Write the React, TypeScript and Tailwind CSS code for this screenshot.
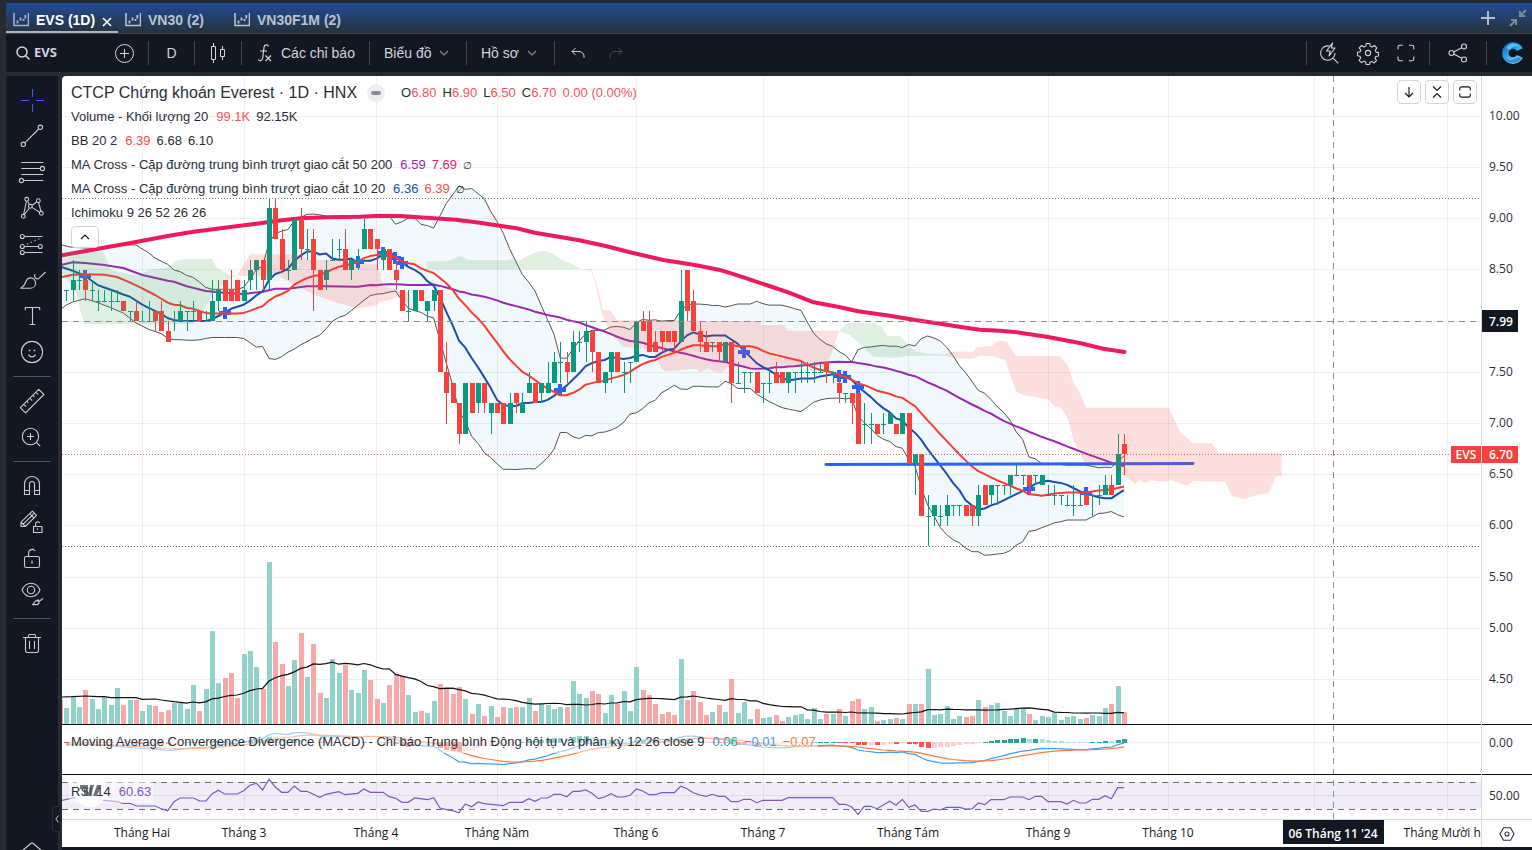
import React from 'react';

type Pt = [number, number];
type Segment = { at: Pt; pts: number[] };

const BAR = 19 / 3;
const X = (i: number) => 4.3 + i * BAR;
const Y = (price: number) => 40.3 + (10 - price) * 102.4;

// open, high, low, close in tenths, two digits each
const CANDLES = `
83838283 83868284 84858384 84858283 83848283 82838182 82838282 82838182 82838282 82828181
81818081 81828080 80818080 80828080 81817980 81827979 79807878 80817980 80828081 81817981
81828081 81818080 80818080 80848082 82848183 84848282 83858282 84848282 82848283 84868385
85868386 86868384 84928391 91928888 88898585 85868485 85908590 90918687 87898687 88898185
85858383 84868385 86888686 87888687 87898585 85868486 86878586 87908789 89898787 88888587
86878587 87878585 85868384 83838181 81838081 81838183 83838282 81828082 82838183 83837575
75787073 74747272 72726869 69746974 74747171 72747174 74747172 71726972 72727171 72727070
70737072 73737172 71737172 73757374 74747272 73747274 73767374 74777476 76787476 76777475
75797578 78797778 78807679 79797577 77777474 74757375 75777477 77777575 75767375 76767476
76807680 80817979 80817777 78797777 79797778 79797878 79797778 78857882 85858081 82837979
79807778 78797777 78787778 78787677 76787678 78787274 74767474 75757375 75757475 75757373
74747274 74757374 75767474 75757474 74757375 75757375 75767475 75767475 75767475 75767575
76767475 75757475 74757273 73737273 73737072 73736868 70726870 70716870 70706969 70716970
70717071 70706969 69716971 71716666 66676367 67676161 61635861 61626062 61626061 61636062
62626162 62626162 62626161 62626061 61646063 64646262 63646264 64646264 64646364 64656365
65666565 65656465 65656364 65656465 64656465 63646363 63646263 63636263 62636262 62646162
62636262 63636262 63636163 63646263 63656364 64656363 64696467 68696567`
  .trim()
  .split(/\s+/)
  .map((s) => [0, 2, 4, 6].map((k) => Number(s.slice(k, k + 2)) / 10));

// bar heights in thirds of a pixel
const VOLUME = [
  48, 84, 51, 102, 75, 45, 81, 57, 108, 57, 72, 72, 39, 57, 54, 36, 42, 63, 63, 45,
  117, 39, 105, 279, 123, 138, 153, 78, 210, 219, 171, 105, 486, 246, 180, 114, 192, 273, 141, 240,
  93, 78, 195, 153, 177, 102, 93, 162, 132, 75, 63, 117, 151, 144, 87, 36, 39, 33, 69, 120,
  111, 90, 111, 75, 30, 60, 24, 54, 21, 51, 48, 51, 51, 78, 39, 60, 57, 45, 51, 51,
  129, 90, 78, 99, 90, 33, 87, 60, 99, 39, 171, 102, 87, 60, 30, 36, 27, 195, 72, 99,
  66, 27, 36, 57, 36, 135, 33, 66, 15, 45, 18, 21, 27, 9, 21, 27, 30, 15, 48, 15,
  30, 30, 45, 24, 69, 75, 45, 51, 9, 12, 15, 18, 15, 60, 60, 60, 165, 27, 30, 54,
  15, 24, 21, 24, 72, 51, 57, 63, 39, 24, 45, 48, 30, 12, 24, 21, 33, 12, 21, 24,
  15, 18, 27, 24, 48, 60, 114, 36,
];

const closes = CANDLES.map((c) => c[3]);

function sma(data: number[], n: number): (number | null)[] {
  return data.map((_, i) =>
    i < n - 1 ? null : data.slice(i - n + 1, i + 1).reduce((a, b) => a + b, 0) / n,
  );
}

function deviation(data: number[], n: number): number[] {
  const mean = sma(data, n);
  return data.map((_, i) => {
    const m = mean[i];
    if (m === null) return 0;
    return Math.sqrt(data.slice(i - n + 1, i + 1).reduce((a, b) => a + (b - m) ** 2, 0) / n);
  });
}

function ema(data: number[], n: number, seed: number): number[] {
  let e = seed;
  return data.map((v) => (e += (v - e) * (2 / (n + 1))));
}

function trace(...segments: Segment[]): Pt[] {
  const out: Pt[] = [];
  segments.forEach(({ at, pts }) => {
    for (let k = 0; k < pts.length; k += 2) out.push([at[0] + pts[k] / 3, at[1] + pts[k + 1] / 3]);
  });
  return out;
}

function plot(values: (number | null)[], scale: (v: number) => number): Pt[] {
  const out: Pt[] = [];
  values.forEach((v, i) => v !== null && out.push([X(i), scale(v)]));
  return out;
}

const join = (pts: Pt[]) => pts.map(([x, y]) => `${x.toFixed(1)},${y.toFixed(1)}`).join(' ');

const A: Pt = [-2, 0];
const B: Pt = [318, 0];
const C: Pt = [638, 184];
const D: Pt = [918, 224];
const V: Pt = [-2, 474];
const W: Pt = [378, 474];
const Z: Pt = [778, 564];

const mid20 = sma(closes, 20);
const dev20 = deviation(closes, 20);

const ma10 = [
  ...trace({ at: A, pts: [6, 574, 38, 584, 76, 600, 114, 628, 152, 641, 171, 648] }),
  ...plot(sma(closes, 10), Y),
];
const ma20 = [
  ...trace({ at: A, pts: [6, 603, 38, 596, 76, 595, 133, 596, 171, 603, 209, 619, 247, 637, 285, 657, 323, 680, 342, 686, 361, 688] }),
  ...plot(mid20, Y),
];
const ma50 = [
  ...trace({ at: A, pts: [6, 566, 38, 559, 76, 561, 133, 567, 190, 576, 247, 597, 323, 614, 342, 617, 380, 631, 437, 645, 494, 650, 551, 654, 608, 647, 646, 638, 684, 638, 741, 631, 798, 631, 893, 632, 931, 627] }),
  ...plot(sma(closes, 50), Y),
];
const ma200 = trace(
  { at: A, pts: [6, 538, 115, 518, 228, 498, 323, 480, 400, 467, 494, 455, 589, 443, 665, 433, 722, 427, 800, 424, 900, 422] },
  { at: B, pts: [0, 419, 60, 420, 150, 426, 228, 431, 300, 440, 358, 449, 410, 457, 464, 470, 541, 483, 598, 493, 680, 511, 750, 529, 850, 552, 940, 566] },
  { at: C, pts: [0, 18, 56, 29, 94, 40, 151, 59, 208, 78, 265, 97, 341, 127, 417, 141, 474, 154, 569, 167, 645, 180, 702, 188, 797, 203] },
  { at: D, pts: [0, 89, 60, 92, 110, 97, 204, 111, 299, 129, 370, 146, 433, 156] },
);
const upper = [
  ...trace({ at: A, pts: [6, 507, 30, 513, 76, 516, 114, 515, 152, 508, 190, 506, 228, 507, 247, 519, 266, 530, 285, 546, 304, 556, 323, 565, 342, 582, 361, 587] }),
  ...plot(mid20.map((m, i) => (m === null ? null : m + 2 * dev20[i])), Y),
];
const lower = [
  ...trace({ at: A, pts: [6, 697, 19, 687, 38, 678, 76, 668, 114, 680, 152, 695, 190, 711, 228, 741, 266, 760, 304, 773, 325, 788, 342, 791, 361, 791] }),
  ...plot(mid20.map((m, i) => (m === null ? null : m - 2 * dev20[i])), Y),
];

const greenClouds = [
  trace({ at: A, pts: [6, 545, 35, 528, 130, 528, 152, 582, 235, 600, 265, 582, 320, 575, 345, 555, 375, 549, 455, 549, 470, 575, 510, 598, 530, 598, 490, 625, 460, 655, 437, 690, 400, 745, 75, 745, 60, 700, 50, 650, 6, 590] }),
  trace({ at: B, pts: [140, 556, 205, 556, 230, 544, 245, 541, 265, 553, 380, 553, 395, 549, 415, 556, 440, 541, 465, 530, 490, 524, 520, 533, 545, 551, 600, 575, 600, 580, 140, 580] }),
  trace({ at: C, pts: [417, 212, 440, 192, 460, 188, 525, 190, 545, 200, 562, 228, 600, 228, 625, 256, 650, 275, 690, 281, 735, 283, 735, 287, 620, 287, 600, 292, 570, 293, 520, 290, 490, 262, 450, 225] }),
];
const pinkClouds = [
  trace(
    { at: A, pts: [530, 600, 570, 535, 725, 535, 740, 551, 855, 551, 870, 561, 950, 565, 965, 600] },
    { at: B, pts: [0, 600, 10, 630, 58, 645, 90, 650, 90, 690, 60, 660, 30, 672, 0, 677] },
    { at: A, pts: [950, 688, 895, 697, 830, 680, 760, 655, 700, 625, 640, 590, 620, 600] },
  ),
  trace(
    { at: B, pts: [600, 578, 635, 580, 655, 640, 668, 703, 690, 703, 712, 733, 882, 733] },
    { at: C, pts: [0, 183, 180, 183, 185, 196, 255, 196, 262, 212, 417, 212, 395, 280, 375, 320, 85, 320, 65, 338, 45, 335, 25, 325, 0, 338] },
    { at: B, pts: [950, 878, 860, 886, 845, 880, 820, 820, 770, 816, 730, 812, 690, 770, 665, 710, 650, 640, 635, 585] },
  ),
  trace(
    { at: C, pts: [735, 280, 760, 275, 820, 275, 830, 262, 870, 260] },
    { at: D, pts: [0, 139, 35, 138, 48, 126, 60, 122, 80, 125, 108, 168, 240, 169, 265, 200, 280, 245, 300, 280, 318, 323, 566, 323, 600, 395, 640, 430, 695, 430, 718, 460, 905, 460, 905, 527, 888, 530, 865, 580, 840, 583, 790, 597, 755, 588, 735, 545, 640, 543, 620, 557, 575, 541, 550, 545, 510, 541, 495, 548, 480, 541, 465, 551, 430, 525, 400, 494, 315, 490, 300, 460, 280, 420, 265, 360, 245, 325, 225, 320, 205, 298, 130, 285, 108, 275, 75, 180, 35, 168, 0, 167] },
    { at: C, pts: [830, 292, 815, 296, 765, 294, 735, 287] },
  ),
];

const volumeAverage = [
  ...trace({ at: V, pts: [6, 441, 38, 440, 76, 438, 114, 440, 133, 440, 152, 443, 228, 443, 247, 448, 285, 447, 304, 450, 342, 455, 361, 457] }),
  ...plot(sma(VOLUME, 20), (v) => 648 - v / 3),
];

const ZERO = 666.3;
const fast = ema(closes, 12, 8.38);
const slow = ema(closes, 26, 8.42);
const macd = fast.map((f, i) => f - slow[i]);
const signal = ema(macd, 9, -0.02);
const macdY = (v: number) => ZERO - v * 62;

const rsi = trace(
  { at: V, pts: [6, 751, 45, 742, 140, 752, 171, 755, 190, 760, 209, 760, 230, 768, 285, 768, 304, 776, 323, 782, 342, 755, 361, 744, 400, 744, 419, 753, 438, 753, 457, 731, 475, 721, 494, 732, 532, 732, 551, 722, 570, 706, 589, 700, 608, 720, 627, 688, 646, 711, 665, 727, 684, 727, 703, 708, 722, 724, 741, 724, 779, 742, 798, 733, 836, 725, 855, 734, 893, 730, 912, 717, 931, 727, 969, 727, 988, 740, 1007, 745, 1026, 757, 1045, 757, 1064, 744, 1102, 749, 1121, 743] },
  { at: W, pts: [0, 774, 19, 779, 38, 782, 57, 788, 76, 762, 95, 770, 114, 756, 133, 761, 190, 767, 209, 757, 247, 757, 266, 746, 285, 754, 304, 744, 323, 744, 342, 733, 361, 733, 380, 740, 399, 724, 418, 724, 437, 720, 456, 730, 475, 746, 494, 741, 513, 731, 532, 741, 551, 741, 570, 736, 589, 717, 608, 723, 627, 734, 646, 734, 665, 728, 703, 728, 722, 709, 741, 716, 760, 728, 779, 735, 798, 739, 817, 733, 836, 739, 855, 739, 874, 755, 893, 755, 912, 748, 931, 748, 950, 758, 969, 751, 1026, 751, 1045, 743, 1178, 743] },
  { at: Z, pts: [-3, 493, 16, 493, 35, 501, 54, 523, 73, 499, 92, 499, 111, 506, 149, 484, 168, 496, 187, 478, 206, 502, 225, 495, 244, 514, 263, 514, 282, 507, 301, 510, 320, 502, 358, 502, 377, 507, 396, 507, 415, 489, 434, 494, 453, 479, 491, 479, 510, 471, 548, 471, 567, 479, 586, 469, 605, 469, 624, 485, 662, 485, 681, 492, 700, 481, 719, 489, 738, 489, 757, 478, 776, 478, 795, 467, 814, 476, 833, 443, 852, 443] },
);

const CROSSES: Pt[] = [
  [23, 199], [163, 236], [296, 185], [321, 176], [327, 178], [333, 181], [340, 186], [498, 313],
  [682, 275], [777, 299], [783, 300], [796, 310], [967, 412], [1024, 416],
];

const MONTHS: [number, string][] = [
  [80, 'Tháng Hai'], [182, 'Tháng 3'], [314, 'Tháng 4'], [435, 'Tháng Năm'], [574, 'Tháng 6'],
  [701, 'Tháng 7'], [846, 'Tháng Tám'], [986, 'Tháng 9'], [1106, 'Tháng 10'], [1252, ''], [1385, 'Tháng Mười hai'],
];
const PRICES = [10, 9.5, 9, 8.5, 8, 7.5, 7, 6.5, 6, 5.5, 5, 4.5];

function Chart() {
  return (
    <svg className="block h-full w-full" role="img" aria-label="EVS 1D">
      <rect y="706" width="100%" height="27" fill="#f0ecf8" />
      <g stroke="#2a2e39" strokeOpacity="0.08" shapeRendering="crispEdges">
        {PRICES.map((p) => (
          <line key={p} x1="0" x2="100%" y1={Math.floor(Y(p)) + 0.5} y2={Math.floor(Y(p)) + 0.5} />
        ))}
        <line x1="0" x2="100%" y1="666.5" y2="666.5" />
        <line x1="0" x2="100%" y1="719.5" y2="719.5" />
        {MONTHS.map(([x]) => (
          <line key={x} x1={x + 0.5} x2={x + 0.5} y1="0" y2="742" />
        ))}
      </g>

      <g shapeRendering="crispEdges">
        <rect x="0" y="624" width="1" height="24" fill="#f7a8a7" />
        {VOLUME.map((v, i) => (
          <rect
            key={i}
            x={Math.round(X(i)) - 2}
            y={Math.round(648 - v / 3)}
            width="5"
            height={Math.round(v / 3)}
            fill={CANDLES[i][3] < CANDLES[i][0] ? '#f7a8a7' : '#92d2cc'}
          />
        ))}
      </g>
      <polyline points={join(volumeAverage)} fill="none" stroke="#111" strokeWidth="1.2" />

      <polygon points={join([...upper, ...[...lower].reverse()])} fill="#2299dd" fillOpacity="0.06" />

      <g fill="none" strokeLinejoin="round">
        <polyline points={join(upper)} stroke="#555" strokeWidth="1" />
        <polyline points={join(lower)} stroke="#555" strokeWidth="1" />
        <polyline points={join(ma200)} stroke="#ef1a5c" strokeWidth="4" strokeLinecap="round" />
        <polyline points={join(ma50)} stroke="#9c27b0" strokeWidth="2" />
        <polyline points={join(ma10)} stroke="#1b4fa8" strokeWidth="2" />
      </g>
      <g fill="#2962ff" shapeRendering="crispEdges">
        {CROSSES.map(([x, y]) => (
          <path key={x} d={`M${x - 2} ${y - 5}h4v4h4v4h-4v4h-4v-4h-4v-4h4z`} />
        ))}
      </g>
      <polyline points={join(ma20)} fill="none" stroke="#fb3b33" strokeWidth="2" strokeLinejoin="round" />
      <line x1="764" y1="388.5" x2="1131" y2="387.5" stroke="#2962ff" strokeWidth="3" strokeLinecap="round" />

      <g shapeRendering="crispEdges">
        {CANDLES.map(([o, h, l, c], i) => {
          const x = Math.round(X(i));
          const fill = c < o ? '#f7413d' : '#089981';
          const top = Math.round(Y(Math.max(o, c)));
          const bottom = Math.round(Y(Math.min(o, c)));
          return (
            <g key={i} fill={fill}>
              <rect x={x} y={Math.round(Y(h))} width="1" height={Math.max(1, Math.round(Y(l)) - Math.round(Y(h)))} />
              <rect x={x - 2} y={top} width="5" height={Math.max(1, bottom - top)} />
            </g>
          );
        })}
      </g>

      {greenClouds.map((c, i) => (
        <polygon key={i} points={join(c)} fill="#43a047" fillOpacity="0.17" />
      ))}
      {pinkClouds.map((c, i) => (
        <polygon key={i} points={join(c)} fill="#f44336" fillOpacity="0.17" />
      ))}

      <g shapeRendering="crispEdges">
        <line x1="0" x2="100%" y1="122.5" y2="122.5" stroke="#777" strokeDasharray="1 2" />
        <line x1="0" x2="100%" y1="470.5" y2="470.5" stroke="#777" strokeDasharray="1 2" />
        <line x1="0" x2="100%" y1="378.5" y2="378.5" stroke="#f7525f" strokeDasharray="1 2" />

        {macd.map((m, i) => {
          const h = m - signal[i];
          const prev = i ? macd[i - 1] - signal[i - 1] : h;
          const size = Math.max(1, Math.round(Math.abs(h) * 62));
          const fill = h >= 0 ? (h >= prev ? '#26a69a' : '#b2dfdb') : h <= prev ? '#ff5252' : '#ffcdd2';
          return <rect key={i} x={Math.round(X(i)) - 2} y={h >= 0 ? 667 - size : 666} width="5" height={size} fill={fill} />;
        })}
      </g>
      <polyline points={join(plot(macd, macdY))} fill="none" stroke="#3da0ee" strokeWidth="1.2" />
      <polyline points={join(plot(signal, macdY))} fill="none" stroke="#ff7a3d" strokeWidth="1.2" />

      <polyline points={join(rsi)} fill="none" stroke="#7e57c2" strokeWidth="1.2" />
      <g stroke="#6b6e78" shapeRendering="crispEdges">
        <line x1="0" x2="100%" y1="706.5" y2="706.5" strokeDasharray="6 5" />
        <line x1="0" x2="100%" y1="733.5" y2="733.5" strokeDasharray="6 5" />
        <line x1="0" x2="100%" y1="245.5" y2="245.5" stroke="#8a8d96" strokeDasharray="6 5" />
        <line x1="1271.5" x2="1271.5" y1="0" y2="743" stroke="#8a8d96" strokeDasharray="6 5" />
      </g>
      <g stroke="#111" shapeRendering="crispEdges">
        <line x1="0" x2="100%" y1="648.5" y2="648.5" />
        <line x1="0" x2="100%" y1="698.5" y2="698.5" />
      </g>
    </svg>
  );
}

function PriceAxis() {
  const label = 'text-[12px]';
  return (
    <svg className="block h-full w-full" fill="#2a2e39" fontFamily="'Open Sans', 'Noto Sans', sans-serif">
      {PRICES.filter((p) => p !== 8).map((p) => (
        <text key={p} x="7" y={Math.floor(Y(p)) + 4} className={label}>
          {p.toFixed(2)}
        </text>
      ))}
      <text x="7" y="671" className={label}>0.00</text>
      <text x="7" y="724" className={label}>50.00</text>
      <rect x="0" y="234" width="36" height="22" fill="#131722" />
      <text x="7" y="250" className={label} fill="#fff" fontWeight="600">7.99</text>
      <rect x="0" y="370" width="36" height="17" fill="#f7413d" />
      <text x="7" y="383" className={label} fill="#fff" fontWeight="600">6.70</text>
      <path d="M0 648.5H60M0 698.5H60" stroke="#111" />
    </svg>
  );
}

type IconProps = { children: React.ReactNode; className?: string; size?: number };

function Icon({ children, className = 'size-7', size = 28 }: IconProps) {
  return (
    <svg viewBox={`0 0 ${size} ${size}`} className={className} fill="none" stroke="currentColor" strokeWidth="1.1" strokeLinejoin="round" aria-hidden="true">
      {children}
    </svg>
  );
}

const TOOLS: ({ name: string; active?: boolean; icon: React.ReactNode } | null)[] = [
  { name: 'Con trỏ', active: true, icon: <path d="M14.5 3v8M14.5 18v8M3 14.5h8M18 14.5h8" /> },
  {
    name: 'Đường xu hướng',
    icon: (
      <>
        <circle cx="5.3" cy="22.3" r="2.2" />
        <circle cx="22.3" cy="5.3" r="2.2" />
        <path d="M7 20.7L20.7 7" />
      </>
    ),
  },
  {
    name: 'Fibonacci',
    icon: (
      <>
        <path d="M3.3 4.5h22M3.3 10.5h19M3.3 16.5h22M5.6 22.5h19.7" />
        <circle cx="24.4" cy="10.5" r="2.1" />
        <circle cx="3.4" cy="22.5" r="2.1" />
      </>
    ),
  },
  {
    name: 'Mẫu hình',
    icon: (
      <>
        <path d="M8.4 7.3L5.7 20.2M9.6 7.2l1.9 3.4M14.1 11.2l4.5-3.2M20.7 8.8l2.2 8.4M14 13.4l7.6 4.8M11.3 14.1l-4.9 6.4" />
        <circle cx="8.7" cy="5.3" r="1.9" />
        <circle cx="20.3" cy="6.7" r="1.9" />
        <circle cx="12.3" cy="12.3" r="1.9" />
        <circle cx="23.3" cy="19.3" r="1.9" />
        <circle cx="5.3" cy="22.3" r="1.9" />
      </>
    ),
  },
  {
    name: 'Dự báo',
    icon: (
      <>
        <path d="M6.5 6.5h18M6.5 16.5h13.6M6.5 22.5h18" />
        <path d="M9 14.2l13-5.8" strokeDasharray="1.3 2.8" />
        <circle cx="4.3" cy="6.5" r="2" />
        <circle cx="4.3" cy="16.5" r="2" />
        <circle cx="4.3" cy="22.5" r="2" />
        <circle cx="22.3" cy="16.5" r="2" />
      </>
    ),
  },
  {
    name: 'Cọ vẽ',
    icon: (
      <>
        <path d="M2.7 22.3H12c3.4 0 5.6-2.4 5.6-5.4 0-2.9-2.1-5-4.9-5-2.4 0-3.9 1.4-4.8 3.8-1 2.8-2.6 5-5.2 6.6z" />
        <path d="M17.2 8.2c-1 .9-.8 2.4.3 3.6 1.1 1.2 2.6 1.3 3.6.4L27.6 6" />
      </>
    ),
  },
  { name: 'Văn bản', icon: <path d="M7.3 8.3V5.5h14.4v2.8M14.5 5.5v17M11.7 22.5h5.6" /> },
  {
    name: 'Biểu tượng',
    icon: (
      <>
        <circle cx="14" cy="14" r="10.6" />
        <path d="M10.5 16.5c.5 1.6 1.9 2.4 3.5 2.4s3-.8 3.5-2.4" />
        <path d="M10.8 12.5h1.6M15.6 12.5h1.6" strokeWidth="1.7" />
      </>
    ),
  },
  null,
  {
    name: 'Thước đo',
    icon: (
      <path d="M2.3 20.7L20.7 2.3l5.2 5.2L7.5 25.9zM5.8 17.2l2.4 2.4M8.8 14.2l1.6 1.6M11.8 11.2l2.4 2.4M14.8 8.2l1.6 1.6M17.8 5.2l2.4 2.4" />
    ),
  },
  {
    name: 'Phóng to',
    icon: (
      <>
        <circle cx="12.5" cy="13.5" r="8.2" />
        <path d="M18.4 19.3l3.8 3.8M12.5 10v7M9 13.5h7" />
      </>
    ),
  },
  null,
  {
    name: 'Nam châm',
    icon: <path d="M6.5 22.5V12a7.5 7.5 0 0 1 15 0v10.5h-5V12a2.5 2.5 0 0 0-5 0v10.5zM6.5 18.5h5M16.5 18.5h5" />,
  },
  {
    name: 'Khóa vẽ',
    icon: (
      <>
        <path d="M3 18.5v-4.3L14.3 3.1l4.2 4.2L7.3 18.5zM3 14.2l4.3 4.3M5 16.3L16.4 5.2M11.8 5.6l4.2 4.2" />
        <path d="M15.5 18.5h8.5v6h-8.5zM17.5 18.5V16a2.2 2.2 0 0 1 4.2-.9M19.5 20.5v1.5" />
      </>
    ),
  },
  {
    name: 'Khóa',
    icon: (
      <>
        <rect x="6.5" y="12.5" width="15" height="11" rx="1.8" />
        <path d="M10.6 12.5V9a3.5 3.5 0 0 1 6.4-2M14 16.5v3.2" />
      </>
    ),
  },
  {
    name: 'Ẩn hiện',
    icon: (
      <>
        <path d="M4 10c2-4.3 5.4-6.7 9-6.7S20 5.7 22 10c-2 4.3-5.4 6.7-9 6.7S6 14.3 4 10z" />
        <circle cx="13" cy="10" r="3.7" />
        <path d="M14.5 24.6c1.6-.3 1.5-4 4.2-4 1.5 0 2.3 1 2.3 2 0 1.3-1 2-2.5 2zM20 19c-.3 1.8 1.2 2.5 2.5 1.5l2.5-2.2" />
      </>
    ),
  },
  null,
  {
    name: 'Xóa',
    icon: (
      <path d="M5 8.5h18M10.5 8.5V6.5c0-.6.4-1 1-1h5c.6 0 1 .4 1 1v2M7.5 8.5v13c0 1.1.7 2 1.8 2h9.4c1.1 0 1.8-.9 1.8-2v-13M11.5 12v8M16.5 12v8" />
    ),
  },
];

function TabIcon() {
  return (
    <svg viewBox="0 0 16 14" className="h-3.5 w-4" fill="none" stroke="currentColor" strokeWidth="1.6" aria-hidden="true">
      <path d="M1 0v12.5h14.5V0" />
      <path d="M4.5 7.5v3M7.5 4.500v3M10.5 6v2M12.3 2v3.5" strokeWidth="1.8" />
    </svg>
  );
}

function Divider() {
  return <span className="h-6 w-px shrink-0 bg-[#434651]" />;
}

function Chevron() {
  return (
    <svg viewBox="0 0 10 6" className="h-1.5 w-2.5 text-[#868993]" fill="none" stroke="currentColor" strokeWidth="1.2" aria-hidden="true">
      <path d="M1 1l4 4 4-4" />
    </svg>
  );
}

function TopBar() {
  return (
    <header className="mt-[3px] ml-1.5 flex h-[31px] items-stretch border-b border-[#3a3f4b] bg-gradient-to-b from-[#1f4b96] to-[#27313d] text-[14px] font-bold text-[#b9c3d2]">
      <nav className="flex">
        <button className="flex w-28 items-center gap-[7px] border-b-2 border-[#aeb5bf] pt-1.5 pl-[7px] text-white">
          <span className="text-[#9fb2cc]"><TabIcon /></span>
          EVS (1D)
          <svg viewBox="0 0 10 10" className="mt-1 size-2.5 shrink-0" stroke="currentColor" strokeWidth="1.6" aria-hidden="true">
            <path d="M1 1l8 8M9 1L1 9" />
          </svg>
        </button>
        <button className="flex w-[109px] items-center gap-[7px] pt-1 pl-[7px]">
          <TabIcon />
          VN30 (2)
        </button>
        <button className="flex items-center gap-[7px] pt-1 pl-[7px]">
          <TabIcon />
          VN30F1M (2)
        </button>
      </nav>
      <div className="ml-auto flex items-center gap-3.5 pr-[5px]">
        <button aria-label="Thêm">
          <svg viewBox="0 0 14 14" className="size-3.5" stroke="#b4bdca" strokeWidth="2" aria-hidden="true">
            <path d="M7 0v14M0 7h14" />
          </svg>
        </button>
        <button aria-label="Thu nhỏ">
          <svg viewBox="0 0 18 18" className="size-[18px]" fill="none" stroke="#7d8896" strokeWidth="2" aria-hidden="true">
            <path d="M17 1l-5.5 5.5M11 2v5h5M1 17l5.5-5.5M2 11h5v5" />
          </svg>
        </button>
      </div>
    </header>
  );
}

function Toolbar() {
  return (
    <div className="ml-1.5 flex h-[38px] items-center bg-[#131722] text-[14px] text-[#d1d4dc]">
      <button className="flex w-[108px] items-center gap-1 pl-2.5 font-['Open_Sans','Noto_Sans',sans-serif] text-[13px] font-bold">
        <svg viewBox="0 0 14 14" className="size-3.5" fill="none" stroke="currentColor" strokeWidth="1.5" aria-hidden="true">
          <circle cx="6" cy="6" r="5" />
          <path d="M9.7 9.7L13.5 13.5" />
        </svg>
        EVS
      </button>
      <button aria-label="So sánh" className="mr-3.5">
        <svg viewBox="0 0 20 20" className="size-5" fill="none" stroke="currentColor" aria-hidden="true">
          <circle cx="10.5" cy="10.5" r="9" />
          <path d="M10.5 6v9M6 10.5h9" />
        </svg>
      </button>
      <Divider />
      <button className="w-[45px] text-center">D</button>
      <Divider />
      <button aria-label="Nến" className="flex w-[46px] justify-center">
        <svg viewBox="0 0 16 20" className="h-5 w-4" fill="none" stroke="currentColor" aria-hidden="true">
          <path d="M1.5 3.5h4v13h-4zM3.5 0v3.5M3.5 16.5V20M10.5 6.5h4v7h-4zM12.5 3v3.5M12.5 13.5V17" />
        </svg>
      </button>
      <Divider />
      <button className="flex w-[127px] items-center gap-2 pl-[15px]">
        <svg viewBox="0 0 16 20" className="h-5 w-4" fill="none" stroke="currentColor" strokeWidth="1.2" aria-hidden="true">
          <path d="M11.5 3.5C11 1.5 7.5 1 7 4.5L5.7 15c-.4 3-3.2 3.5-4.2 1.5M3 8h7M8.5 12.5l5.5 5.5M14 12.5L8.5 18" />
        </svg>
        Các chỉ báo
      </button>
      <Divider />
      <button className="flex w-24 items-center gap-2 pl-3.5">
        Biểu đồ
        <Chevron />
      </button>
      <Divider />
      <button className="flex w-[87px] items-center gap-2 pl-3.5">
        Hồ sơ
        <Chevron />
      </button>
      <Divider />
      <button aria-label="Hoàn tác" className="ml-4">
        <svg viewBox="0 0 14 12" className="h-3 w-3.5" fill="none" stroke="currentColor" aria-hidden="true">
          <path d="M4.5 1L1 4.5 4.5 8M1 4.5h7c3 0 5 2 5 4.5v2" />
        </svg>
      </button>
      <button aria-label="Làm lại" className="ml-6 text-[#434651]">
        <svg viewBox="0 0 14 12" className="h-3 w-3.5" fill="none" stroke="currentColor" aria-hidden="true">
          <path d="M9.5 1L13 4.5 9.5 8M13 4.5H6C3 4.5 1 6.5 1 9v2" />
        </svg>
      </button>

      <div className="ml-auto flex items-center pr-2">
        <Divider />
        <button aria-label="Tìm nhanh" className="ml-2">
          <Icon>
            <path d="M15 7.2A7.2 7.2 0 1 0 20 14M18.3 19.3l5 5" />
            <path d="M17.5 4l-6 8h3.7l-1.2 5 6-8h-3.7z" />
          </Icon>
        </button>
        <button aria-label="Cài đặt" className="ml-[11px]">
          <Icon>
            <circle cx="14" cy="14" r="2.6" />
            <path d="M12.3 4.5h3.4l.5 2.7 1.9.8 2.3-1.5 2.4 2.4-1.5 2.3.8 1.9 2.4.5v3.4l-2.7.5-.8 1.8 1.5 2.3-2.4 2.4-2.2-1.6-1.9.8-.5 2.3h-3.4l-.5-2.6-1.8-.8-2.3 1.6-2.4-2.4 1.6-2.3-.8-1.8-2.4-.5v-3.4l2.6-.5.8-1.8L5.2 8.9l2.4-2.4 2.3 1.5 1.8-.8z" />
          </Icon>
        </button>
        <button aria-label="Toàn màn hình" className="mr-[9px] ml-2.5">
          <Icon>
            <path d="M6 10.5V8c0-1 .8-1.8 1.8-1.8h3M17 6.2h3c1 0 1.8.8 1.8 1.8v2.5M21.8 17.5V20c0 1-.8 1.8-1.8 1.8h-3M10.8 21.8h-3C6.8 21.8 6 21 6 20v-2.5" />
          </Icon>
        </button>
        <Divider />
        <button aria-label="Chia sẻ" className="mx-3.5">
          <Icon>
            <circle cx="7.5" cy="14" r="2.5" />
            <circle cx="20" cy="7.5" r="2.5" />
            <circle cx="20" cy="20.5" r="2.5" />
            <path d="M9.7 12.9l8-4.2M9.7 15.1l8 4.2" />
          </Icon>
        </button>
        <Divider />
        <a href="#" aria-label="Trang chủ" className="ml-[15px]">
          <svg viewBox="0 0 22 22" className="size-[22px]" fill="none" aria-hidden="true">
            <defs>
              <linearGradient id="brand" x1="0" y1="0" x2="0.6" y2="1">
                <stop offset="0" stopColor="#1467c6" />
                <stop offset="0.5" stopColor="#2ba3e6" />
                <stop offset="1" stopColor="#5fd0f5" />
              </linearGradient>
            </defs>
            <path d="M17.8 7.6A7.6 7.6 0 1 0 17.8 14.4" stroke="url(#brand)" strokeWidth="6.5" />
            <path d="M4 6C7 .5 14 .2 19 5c-5-1.5-9-.5-11 3z" fill="#4cc3f3" />
            <path d="M2.5 13c1 5 5 6.5 9.5 4 2.5-1.4 5-2 8-1.2-3 5-10 6.5-14 3.7-2.5-1.7-3.5-4-3.5-6.5z" fill="#1a55b5" fillOpacity="0.55" />
          </svg>
        </a>
      </div>
    </div>
  );
}

function Sidebar() {
  return (
    <aside className="relative ml-1.5 flex w-[52px] shrink-0 flex-col items-center bg-[#131722] pt-1.5 text-[#c9ccd4]">
      {TOOLS.map((tool, i) =>
        tool ? (
          <button key={i} aria-label={tool.name} className={tool.active ? 'flex h-9 items-center text-[#3b5bff]' : 'flex h-9 items-center'}>
            <Icon>{tool.icon}</Icon>
          </button>
        ) : (
          <span key={i} className="my-1.5 h-px w-[38px] shrink-0 bg-[#50535e]" />
        ),
      )}
      <button aria-label="Lên" className="absolute bottom-0 h-2 overflow-hidden">
        <svg viewBox="0 0 20 8" className="h-2 w-5" fill="none" stroke="currentColor" strokeWidth="1.2" aria-hidden="true">
          <path d="M0 9l8.5-7.2c1-.8 2-.8 3 0L20 9" />
        </svg>
      </button>
      <button aria-label="Ẩn thanh công cụ" className="absolute right-0 bottom-[18px] flex h-[26px] w-2 translate-x-0.5 items-center justify-center rounded-l border border-r-0 border-[#2a2e39] bg-[#131722]">
        <svg viewBox="0 0 4 8" className="h-2 w-1" fill="none" stroke="currentColor" aria-hidden="true">
          <path d="M3.5 .5L.8 4l2.7 3.5" />
        </svg>
      </button>
    </aside>
  );
}

const boxButton = 'flex size-6 items-center justify-center rounded border border-[#d1d4dc] bg-white text-[#131722]';

function Legend() {
  return (
    <div className="absolute top-[5px] left-[9px] text-[13px] text-[#2a2e39] [&>div]:flex [&>div]:h-6 [&>div]:items-center [&>div]:gap-1.5 [&>div]:whitespace-nowrap">
      <div>
        <h1 className="text-[16px]">CTCP Chứng khoán Everest · 1D · HNX</h1>
        <span className="ml-1 flex size-[18px] items-center justify-center rounded-full bg-[#ebedf1]">
          <span className="h-1 w-2.5 rounded-full bg-[#8b8e98]" />
        </span>
        <span className="ml-2.5">O<span className="text-[#f7525f]">6.80</span></span>
        <span>H<span className="text-[#f7525f]">6.90</span></span>
        <span>L<span className="text-[#f7525f]">6.50</span></span>
        <span>C<span className="text-[#f7525f]">6.70</span></span>
        <span className="text-[#f7525f]">0.00 (0.00%)</span>
      </div>
      <div>
        Volume - Khối lượng 20 <span className="ml-0.5 text-[#f7525f]">99.1K</span>
        <span>92.15K</span>
      </div>
      <div>
        BB 20 2 <span className="ml-0.5 text-[#fb4a45]">6.39</span>
        <span>6.68</span>
        <span>6.10</span>
      </div>
      <div>
        MA Cross - Cặp đường trung bình trượt giao cắt 50 200 <span className="ml-0.5 text-[#9c27b0]">6.59</span>
        <span className="text-[#e91e63]">7.69</span>
        <span className="text-[10px]">∅</span>
      </div>
      <div>
        MA Cross - Cặp đường trung bình trượt giao cắt 10 20 <span className="ml-0.5 text-[#1b4fa8]">6.36</span>
        <span className="text-[#fb4a45]">6.39</span>
        <span className="text-[10px]">∅</span>
      </div>
      <div>Ichimoku 9 26 52 26 26</div>
      <button aria-label="Thu gọn" className="mt-px flex h-[22px] w-7 items-center justify-center rounded-sm border border-[#d1d4dc] bg-white">
        <svg viewBox="0 0 10 6" className="h-1.5 w-2.5" fill="none" stroke="#131722" strokeWidth="1.2" aria-hidden="true">
          <path d="M1 5l4-4 4 4" />
        </svg>
      </button>
    </div>
  );
}

export default function App() {
  return (
    <main className="flex h-screen flex-col overflow-hidden bg-[#262b33] font-['Liberation_Sans',Roboto,sans-serif]">
      <TopBar />
      <Toolbar />
      <div className="mt-1 flex min-h-0 flex-1">
        <Sidebar />
        <div className="ml-1 flex min-w-0 flex-1 flex-col bg-[#131722] pb-[3px]">
          <section className="flex min-h-0 flex-1 flex-col rounded-tl bg-white">
            <div className="flex min-h-0 flex-1">
              <div className="relative min-w-0 flex-1 border-r border-[#d6d8e0]">
                <Chart />
                <Legend />
                <div className="absolute top-1 right-1 flex gap-1">
                  <button aria-label="Xuống" className={boxButton}>
                    <svg viewBox="0 0 12 12" className="size-3" fill="none" stroke="currentColor" strokeWidth="1.1" aria-hidden="true">
                      <path d="M6 1v10M2 7l4 4 4-4" />
                    </svg>
                  </button>
                  <button aria-label="Thu" className={boxButton}>
                    <svg viewBox="0 0 12 14" className="h-3.5 w-3" fill="none" stroke="currentColor" strokeWidth="1.1" aria-hidden="true">
                      <path d="M2 1.5l4 4 4-4M2 12.5l4-4 4 4" />
                    </svg>
                  </button>
                  <button aria-label="Mở rộng" className={boxButton}>
                    <svg viewBox="0 0 12 12" className="size-3" fill="none" stroke="currentColor" strokeWidth="1.1" aria-hidden="true">
                      <path d="M.7 4.5V3C.7 1.7 1.7.9 2.7.9h6.6c1 0 2 .8 2 2.1v1.5M.7 7.5V9c0 1.3 1 2.1 2 2.1h6.6c1 0 2-.8 2-2.1V7.5" />
                    </svg>
                  </button>
                </div>
                <span className="absolute top-[370px] right-0 flex h-[17px] w-[30px] items-center justify-center bg-[#f7413d] font-['Open_Sans','Noto_Sans',sans-serif] text-[12px] font-semibold text-white">
                  EVS
                </span>
                <div className="absolute top-[654px] left-[7px] flex h-[23px] items-center gap-1.5 bg-white/50 px-0.5 text-[13px] whitespace-nowrap text-[#2a2e39]">
                  Moving Average Convergence Divergence (MACD) - Chỉ báo Trung bình Động hội tụ và phân kỳ 12 26 close 9
                  <span className="ml-0.5 text-[#26a69a]">0.06</span>
                  <span className="text-[#3da0ee]">−0.01</span>
                  <span className="text-[#ff7a3d]">−0.07</span>
                </div>
                <div className="absolute top-[699px] left-3 size-8 rounded-full bg-white/90" />
                <div className="absolute top-[704px] left-[7px] flex h-[23px] items-center gap-2 bg-white/50 px-0.5 text-[13px] text-[#2a2e39]">
                  RSI 14 <span className="text-[#7e57c2]">60.63</span>
                </div>
                <svg viewBox="0 0 22 12" className="absolute top-[709px] left-[18px] h-3 w-[22px]" fill="#50535c" fillOpacity="0.8" aria-hidden="true">
                  <path d="M0 0h8v11H4V4H0zM10 0h4l-3 11H8zM17 0h4.5L17 11h-4z" />
                </svg>
              </div>
              <div className="w-[50px] shrink-0">
                <PriceAxis />
              </div>
            </div>
            <div className="flex h-7 shrink-0 border-t border-[#d6d8e0]">
              <div className="min-w-0 flex-1 border-r border-[#d6d8e0]">
                <svg className="block h-full w-full" fill="#131722" fontFamily="'Open Sans', 'Noto Sans', sans-serif" textAnchor="middle">
                  {MONTHS.map(([x, name]) => (
                    <text key={x} x={x} y="17" className="text-[12px]">
                      {name}
                    </text>
                  ))}
                  <rect x="1221" y="0" width="101" height="24" fill="#131722" />
                  <text x="1271" y="18" className="text-[12px]" fill="#fff" fontWeight="600">
                    06 Tháng 11 '24
                  </text>
                </svg>
              </div>
              <button aria-label="Cài đặt trục" className="flex w-[50px] items-center justify-center text-[#2a2e39]">
                <svg viewBox="0 0 16 16" className="size-4" fill="none" stroke="currentColor" strokeWidth="1.1" aria-hidden="true">
                  <path d="M4.5 1.7h7L15 8l-3.5 6.3h-7L1 8z" />
                  <circle cx="8" cy="8" r="2" />
                </svg>
              </button>
            </div>
          </section>
        </div>
      </div>
    </main>
  );
}
